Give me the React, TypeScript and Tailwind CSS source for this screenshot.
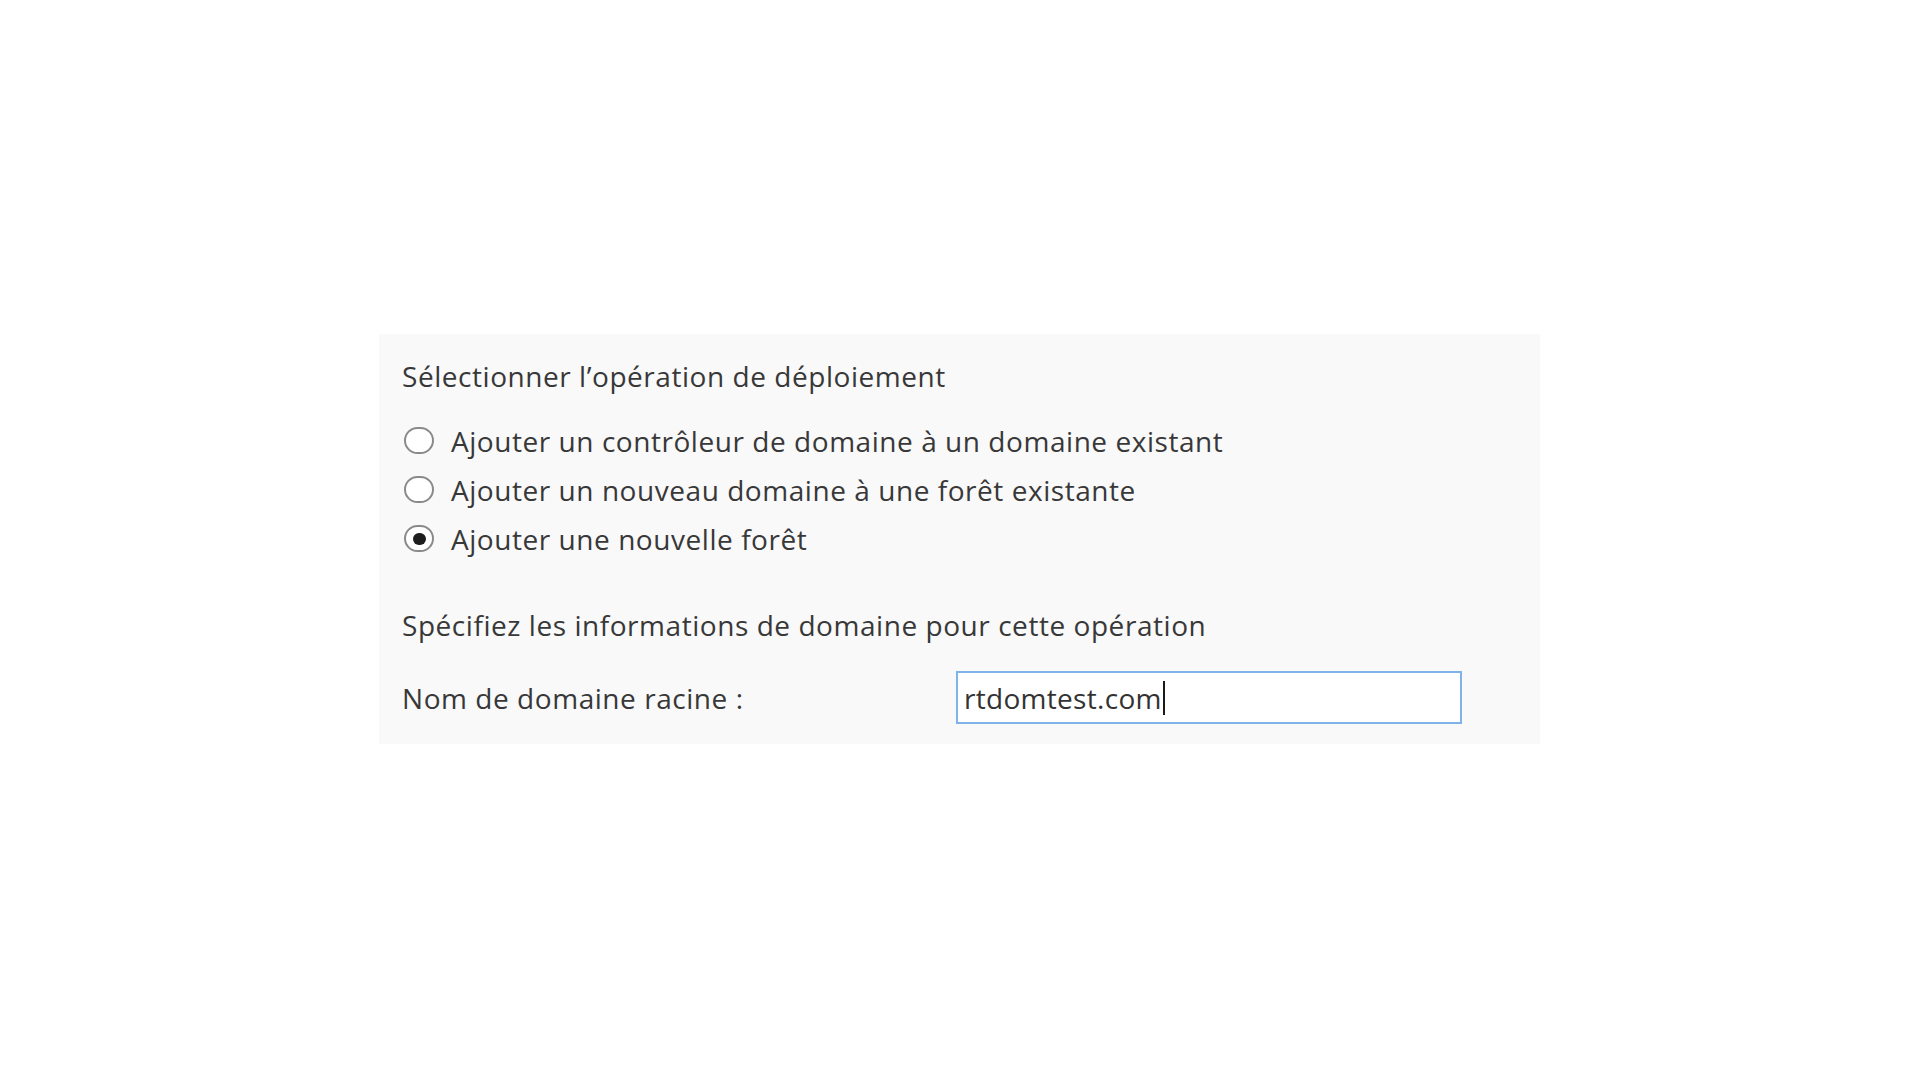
import { useState } from "react";

const options = [
  "Ajouter un contrôleur de domaine à un domaine existant",
  "Ajouter un nouveau domaine à une forêt existante",
  "Ajouter une nouvelle forêt",
];

export default function App() {
  const [selected, setSelected] = useState(2);
  const domain = "rtdomtest.com";

  return (
    <div className="min-h-screen w-full bg-white font-['Open_Sans',sans-serif] text-[#383838]">
      <div className="h-[334px]" />
      <div className="ml-[379px] w-[1161px] bg-[#f9f9fa] pl-[23px] pr-[20px] pt-[23px] pb-[20px]">
        <h2 className="h-[38px] text-[28px] leading-[38px] tracking-[0.55px]">
          Sélectionner l’opération de déploiement
        </h2>

        <div className="mt-[21px] flex flex-col">
          {options.map((label, i) => (
            <label
              key={label}
              className="flex h-[49px] cursor-default items-center"
              onClick={() => setSelected(i)}
            >
              <span className="ml-[2px] flex h-[27px] w-[30px] items-center justify-center rounded-full border-2 border-[#8a8a8a] bg-white">
                {selected === i && (
                  <span className="h-[12px] w-[13px] rounded-full bg-[#1e1e1e]" />
                )}
              </span>
              <span className="ml-[17px] text-[28px] leading-[38px] tracking-[0.55px]">
                {label}
              </span>
            </label>
          ))}
        </div>

        <p className="mt-[43px] h-[38px] text-[28px] leading-[38px] tracking-[0.55px]">
          Spécifiez les informations de domaine pour cette opération
        </p>

        <div className="mt-[27px] flex h-[53px] items-center">
          <span className="w-[554px] text-[28px] leading-[38px] tracking-[0.55px]">
            Nom de domaine racine :
          </span>
          <div className="flex h-[53px] w-[506px] items-center border-2 border-[#80b3ea] bg-white px-[6px] text-[28px] tracking-[0.3px] text-[#333]">
            <span>{domain}</span>
            <span className="ml-[1px] h-[34px] w-[2px] bg-[#1a1a1a]" />
          </div>
        </div>
      </div>
    </div>
  );
}
